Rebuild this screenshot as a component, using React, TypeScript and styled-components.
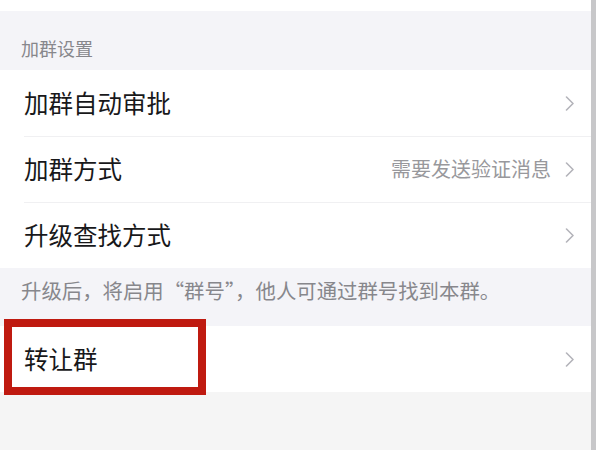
import React from 'react'
import styled, { createGlobalStyle } from 'styled-components'

// ================================================================================================

const GlobalStyle = createGlobalStyle`
  html, body {
    margin: 0;
    padding: 0;
    background: #ffffff;
  }

  body {
    font-family: "Noto Sans CJK SC", "Noto Sans", sans-serif;
  }
`

// ================================================================================================

const Page = styled.div`
  display: flex;
  width: 600px;
  height: 450px;
  overflow: hidden;
  background: #ffffff;
`

const Content = styled.div`
  flex: 1;
  display: flex;
  flex-direction: column;
  background: #f5f5f5;
`

const ScrollEdge = styled.div`
  width: 5px;
  margin-right: 4px;
  background: #c7c7c9;
`

const TopFill = styled.div`
  height: 11px;
  background: #ffffff;
`

const SectionTitle = styled.div`
  height: 59px;
  box-sizing: border-box;
  padding: 24px 0 0 21px;
  background: #f4f4f8;
  color: #87878c;
  font-size: 18px;
  line-height: 26px;
`

const Group = styled.div`
  display: flex;
  flex-direction: column;
  background: #ffffff;
`

const Row = styled.div<{ $divider?: boolean }>`
  position: relative;
  height: 66px;
  display: flex;
  align-items: center;
  padding: 0 16px 0 24px;

  &::before {
    content: '';
    display: ${props => (props.$divider ? 'block' : 'none')};
    position: absolute;
    left: 24px;
    right: 0;
    top: 0;
    height: 1px;
    background: #f0f0f2;
  }
`

const Label = styled.span`
  flex: 1;
  color: #18181a;
  font-size: 24.5px;
  line-height: 32px;
`

const Value = styled.span`
  margin-right: 14px;
  color: #98989c;
  font-size: 20px;
  line-height: 28px;
`

const Note = styled.div`
  height: 58px;
  box-sizing: border-box;
  padding: 8px 0 0 21px;
  background: #f4f4f8;
  color: #87878c;
  font-size: 20.4px;
  line-height: 28px;
  white-space: nowrap;
`

const Highlight = styled.div`
  position: absolute;
  left: 4px;
  top: -7px;
  width: 202px;
  height: 76px;
  box-sizing: border-box;
  border: 8px solid #bf1a10;
  pointer-events: none;
`

// ================================================================================================

const Chevron = () => (
  <svg width="10" height="15" viewBox="0 0 10 15" fill="none">
    <path d="M1.5 1 L8 7.5 L1.5 14" stroke="#b4b4ba" strokeWidth="1.6" strokeLinejoin="round" strokeLinecap="round" />
  </svg>
)

// ================================================================================================

const App = () => {
  return (
    <>
      <GlobalStyle />
      <Page>
        <Content>
          <TopFill />
          <SectionTitle>加群设置</SectionTitle>

          <Group>
            <Row>
              <Label>加群自动审批</Label>
              <Chevron />
            </Row>
            <Row $divider>
              <Label>加群方式</Label>
              <Value>需要发送验证消息</Value>
              <Chevron />
            </Row>
            <Row $divider>
              <Label>升级查找方式</Label>
              <Chevron />
            </Row>
          </Group>

          <Note>升级后，将启用“群号”，他人可通过群号找到本群。</Note>

          <Group>
            <Row>
              <Label>转让群</Label>
              <Chevron />
              <Highlight />
            </Row>
          </Group>
        </Content>
        <ScrollEdge />
      </Page>
    </>
  )
}

// ================================================================================================

export default App
